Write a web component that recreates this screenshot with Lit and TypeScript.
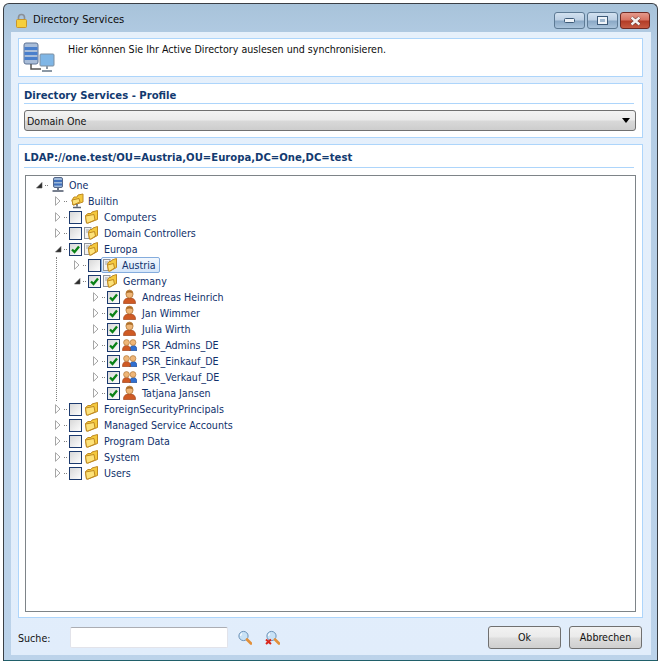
import { LitElement, html, css, svg } from "lit";
import { customElement } from "lit/decorators.js";

type Kind = "root" | "gpo" | "folder" | "ou" | "user" | "group";
interface Node { label: string; kind: Kind; check?: boolean; open?: boolean; selected?: boolean; guide?: boolean; children?: Node[]; }

const TREE: Node = {
  label: "One", kind: "root", open: true, children: [
    { label: "Builtin", kind: "gpo" },
    { label: "Computers", kind: "folder", check: false },
    { label: "Domain Controllers", kind: "ou", check: false },
    { label: "Europa", kind: "ou", check: true, open: true, guide: true, children: [
      { label: "Austria", kind: "ou", check: false, selected: true },
      { label: "Germany", kind: "ou", check: true, open: true, children: [
        { label: "Andreas Heinrich", kind: "user", check: true },
        { label: "Jan Wimmer", kind: "user", check: true },
        { label: "Julia Wirth", kind: "user", check: true },
        { label: "PSR_Admins_DE", kind: "group", check: true },
        { label: "PSR_Einkauf_DE", kind: "group", check: true },
        { label: "PSR_Verkauf_DE", kind: "group", check: true },
        { label: "Tatjana Jansen", kind: "user", check: true },
      ] },
    ] },
    { label: "ForeignSecurityPrincipals", kind: "folder", check: false },
    { label: "Managed Service Accounts", kind: "folder", check: false },
    { label: "Program Data", kind: "folder", check: false },
    { label: "System", kind: "folder", check: false },
    { label: "Users", kind: "folder", check: false },
  ],
};

const folderShape = svg`
  <path d="M1.5 6.5 L4 4.5 H7 L8 3 L13.5 1.5 V10.5 L4 14 H2.5 Z" fill="#f4c93e" stroke="#c08a22"/>
  <path d="M2.5 14 L1.5 7 L10 5.5 L11 11 L4 14 Z" fill="#fde27a" stroke="#c08a22"/>`;

function treeIcon(kind: Kind) {
  switch (kind) {
    case "root":
      return svg`<svg width="14" height="16" viewBox="0 0 14 16">
        <rect x="2.5" y="0.5" width="9" height="10" rx="1.5" fill="#9db8d8" stroke="#55678a"/>
        <rect x="3" y="3" width="8" height="2" fill="#3f6fbb"/><rect x="3" y="6.5" width="8" height="2" fill="#3f6fbb"/>
        <path d="M7 11V13M1.5 14H12.5" stroke="#4a5468" stroke-width="1.6"/></svg>`;
    case "gpo":
      return svg`<svg width="15" height="16" viewBox="0 0 15 16">
        <path d="M2 7 L4 4 H7 L8 2 L13 1 V9 L4 12 H3 Z" fill="#f4c93e" stroke="#c08a22"/>
        <path d="M3 12 L2 7 L9 5.5 L10 9 Z" fill="#fde27a" stroke="#c08a22"/>
        <path d="M7 11V13.5M3 14.5H11" stroke="#5a6270" stroke-width="1.5"/></svg>`;
    case "folder":
      return svg`<svg width="15" height="16" viewBox="0 0 15 16">${folderShape}</svg>`;
    case "ou":
      return svg`<svg width="15" height="16" viewBox="0 0 15 16">
        <rect x="0.5" y="2.5" width="6.5" height="11" fill="#f2f2f2" stroke="#8f949c"/>
        <path d="M2 5H5M2 7H5" stroke="#a0a6ac"/>
        <path d="M4.5 7 L6 4.5 H8 L9 3 L13.5 1.5 V10.5 L7 14 H5.5 Z" fill="#f4c93e" stroke="#c08a22"/>
        <path d="M5.5 14 L4.5 8 L10.5 6.5 L11.5 11 L7 14 Z" fill="#fde27a" stroke="#c08a22"/></svg>`;
    case "user":
      return svg`<svg width="15" height="16" viewBox="0 0 15 16">
        <path d="M1.5 14.5 C1.5 10.5 3.5 9 7.5 9 S13.5 10.5 13.5 14.5 Z" fill="#cf5a24" stroke="#a0441a" stroke-width=".7"/>
        <ellipse cx="7.5" cy="5" rx="3.6" ry="4" fill="#efb677" stroke="#b27a3c" stroke-width=".8"/>
        <path d="M4 4.5 C4.5 .5 10.5 .5 11 4.5 C9 3.2 6 3.2 4 4.5Z" fill="#a86a24"/></svg>`;
    case "group":
      return svg`<svg width="15" height="16" viewBox="0 0 15 16">
        <path d="M7.5 13.5 C7.5 10 9.5 8.5 11.5 8.5 S15 10 15 13.5 Z" fill="#2f6fd0" stroke="#1d4c98" stroke-width=".7"/>
        <circle cx="11" cy="5.5" r="2.9" fill="#efb677" stroke="#b27a3c" stroke-width=".7"/>
        <path d="M0.5 13.5 C0.5 10 2 8.5 4.5 8.5 S8.5 10 8.5 13.5 Z" fill="#cf5a24" stroke="#a0441a" stroke-width=".7"/>
        <circle cx="4.5" cy="5.5" r="2.9" fill="#efb677" stroke="#b27a3c" stroke-width=".7"/></svg>`;
  }
}

const lensIcon = svg`
  <circle cx="6.5" cy="6" r="4.6" fill="#c8e2f6" stroke="#6d93b8"/>
  <path d="M5 3.5 A3 3 0 0 0 3.6 6" stroke="#fff" fill="none" stroke-width="1.2"/>
  <path d="M10 9.5 L14 13.5" stroke="#e2903a" stroke-width="2.6" stroke-linecap="round"/>`;

@customElement("tree-node")
class TreeNode extends LitElement {
  static properties = { node: { attribute: false } };
  node!: Node;
  static styles = css`
    :host { display: block; }
    .row { display: flex; align-items: center; height: 16px; }
    .toggle { width: 8px; height: 16px; display: flex; align-items: center; margin-right: 2px; }
    .dots { width: 3px; height: 1px; margin-right: 2px; background: repeating-linear-gradient(90deg, #808080 0 1px, transparent 1px 2px); }
    .check { width: 13px; height: 13px; box-sizing: border-box; border: 1px solid #1c3a6e; margin-right: 2px; flex: none; display: flex;
      background: linear-gradient(135deg, #d8d8d8, #fdfdfd); }
    .check svg { display: block; }
    .icon { width: 15px; height: 16px; flex: none; margin-right: 4px; display: block; position: relative; z-index: 1; }
    .icon.root { width: 14px; margin-right: 3px; margin-left: 1px; }
    .icon.gpo { margin-right: 2px; margin-left: 1px; }
    .label { color: #10306b; white-space: nowrap; line-height: 15px; padding: 0 1px; }
    .label.sel { border: 1px solid #84acdd; border-radius: 2px; background: linear-gradient(#f3f8fe, #d3e5fa); padding: 0 3px 0 20px; margin-left: -21px; height: 16px; line-height: 14px; box-sizing: border-box; }
    .kids { margin-left: 19px; }
    .kids.guide { margin-left: 2px; border-left: 1px dotted #808080; padding-left: 16px; }
  `;
  render() {
    const n = this.node;
    return html`
      <div class="row">
        <span class="toggle">
          ${n.open
            ? html`<svg width="8" height="8" viewBox="0 0 8 8"><path d="M7 1.5V7H1.5Z" fill="#2b2b2b" stroke="#555" stroke-width=".6"/></svg>`
            : html`<svg width="8" height="10" viewBox="0 0 8 10"><path d="M1.5 .7V9.3L6 5Z" fill="#fff" stroke="#a6a6a6"/></svg>`}
        </span>
        <span class="dots"></span>
        ${n.check === undefined ? "" : html`<span class="check">${n.check
          ? html`<svg width="11" height="11" viewBox="0 0 11 11"><path d="M2 5.5 L4.5 8 L9 2.5" fill="none" stroke="#0a8216" stroke-width="2.3"/></svg>`
          : ""}</span>`}
        <span class="icon ${n.kind}">${treeIcon(n.kind)}</span>
        <span class="label ${n.selected ? "sel" : ""}">${n.label}</span>
      </div>
      ${n.children
        ? html`<div class="kids ${n.guide ? "guide" : ""}">${n.children.map((c) => html`<tree-node .node=${c}></tree-node>`)}</div>`
        : ""}
    `;
  }
}

@customElement("app-root")
export class AppRoot extends LitElement {
  static styles = css`
    :host { display: block; width: 661px; height: 664px; box-sizing: border-box; padding: 3px 3px 3px 3px; background: #fff;
      font: 10.6px "DejaVu Sans", Tahoma, sans-serif; font-stretch: condensed; color: #111; }
    .window { box-sizing: border-box; height: 658px; border: 1px solid #3a3f45; border-bottom-color: #20606a; border-radius: 6px 6px 0 0;
      background: linear-gradient(#a8c3da 0, #b3cce4 40px, #bcd3ea 100%); padding: 0 6px 5px 7px; display: flex; flex-direction: column; }
    .title { height: 28px; flex: none; display: flex; align-items: flex-start; }
    .lock { margin: 9px 5px 0 4px; display: block; }
    .title-text { font: 11.1px/14px "DejaVu Sans", sans-serif; font-stretch: condensed; color: #0c0c0c; flex: 1; margin-top: 9px; }
    .controls { display: flex; gap: 2px; margin-right: 1px; margin-top: 8px; }
    .ctl { width: 31px; height: 17px; box-sizing: border-box; border: 1px solid #5d7a94; border-radius: 3px;
      background: linear-gradient(#d2e1f0 0, #bdd0e4 45%, #8ba9c6 55%, #a9c3db 100%); display: flex; align-items: center; justify-content: center; }
    .ctl.close { width: 30px; border-color: #6e2a24; background: linear-gradient(#e59a8c 0, #d87463 45%, #b33d28 55%, #c65a42 100%); }
    .body { flex: 1; min-height: 0; background: linear-gradient(#e6f0fb, #e1edfb); padding: 6px 8px 0 7px; display: flex; flex-direction: column; gap: 6px; }
    .panel { background: #fff; border: 1px solid #add5fb; box-sizing: border-box; flex: none; }
    .intro { height: 39px; display: flex; padding: 3px 0 0 4px; }
    .intro .msg { margin-left: 13px; line-height: 14px; color: #0b0b0b; }
    .profile { height: 55px; padding: 5px 6px 0 5px; }
    .head { font-size: 11.2px; font-weight: bold; color: #123a70; line-height: 13px; padding-bottom: 3px; border-bottom: 1px solid #add5fb; margin-right: 2px; }
    .profile .head { padding-bottom: 1px; }
    .select { margin-top: 6px; height: 21px; box-sizing: border-box; border: 1px solid #707070; border-radius: 3px; width: 612px;
      background: linear-gradient(#f3f3f3 0, #ebebeb 45%, #d8d8d8 55%, #cdcdcd 100%); display: flex; align-items: center; justify-content: space-between; padding: 0 5px 0 2px; color: #111; }
    .arrow { width: 0; height: 0; border: 4px solid transparent; border-top: 5px solid #000; border-bottom: 0; }
    .main { flex: 1; min-height: 0; padding: 6px 6px 5px 5px; display: flex; flex-direction: column; }
    .tree { flex: 1; min-height: 0; margin: 7px 0 0 1px; border: 1px solid #7e8488; width: 611px; box-sizing: border-box; padding: 1px 0 0 9px; background: #fff; overflow: hidden; }
    .footer { height: 37px; flex: none; display: flex; align-items: center; margin-top: -6px; padding: 2px 1px 0 0; box-sizing: border-box; }
    .footer label { width: 52px; color: #111; }
    .input { width: 158px; height: 21px; box-sizing: border-box; background: #fff; border: 1px solid #e2e3ea; border-top-color: #abadb3; border-radius: 2px; }
    .search { display: flex; gap: 13px; margin-left: 9px; }
    .search svg { display: block; }
    .spacer { flex: 1; }
    .btn { width: 73px; height: 23px; box-sizing: border-box; border: 1px solid #707070; border-radius: 3px; text-align: center; line-height: 21px; color: #111;
      background: linear-gradient(#f2f2f2 0, #ebebeb 45%, #dcdcdc 55%, #cfcfcf 100%); }
    .btn + .btn { margin-left: 8px; }
  `;
  render() {
    return html`
      <div class="window">
        <div class="title">
          <svg class="lock" width="13" height="15" viewBox="0 0 13 15">
            <path d="M3.5 7V4.5a3 3 0 0 1 6 0V7" fill="none" stroke="#8a8f96" stroke-width="1.6"/>
            <rect x="1.5" y="6.5" width="10" height="8" rx="1" fill="#f6cf3c" stroke="#c9962a"/>
          </svg>
          <span class="title-text">Directory Services</span>
          <div class="controls">
            <div class="ctl"><svg width="11" height="5"><rect x=".5" y=".5" width="10" height="4" rx="1" fill="#eef3f8" stroke="#3d5a78"/></svg></div>
            <div class="ctl"><svg width="11" height="9"><rect x=".5" y=".5" width="10" height="8" fill="#eef3f8" stroke="#3d5a78"/><rect x="3" y="3" width="5" height="3" fill="#9fb8d0"/></svg></div>
            <div class="ctl close"><svg width="13" height="10" viewBox="0 0 13 10"><path d="M2.5 1.5 L10.5 8.5 M10.5 1.5 L2.5 8.5" stroke="#5e2a24" stroke-width="3.6"/><path d="M2.5 1.5 L10.5 8.5 M10.5 1.5 L2.5 8.5" stroke="#f6f2f0" stroke-width="2.4"/></svg></div>
          </div>
        </div>
        <div class="body">
          <div class="panel intro">
            <svg width="32" height="32" viewBox="0 0 32 32">
              <rect x="1" y="1" width="14" height="21" rx="2" fill="#a9bdd8" stroke="#5f7496"/>
              <rect x="1.5" y="5" width="13" height="3" fill="#4a7fcc"/><rect x="1.5" y="10" width="13" height="3" fill="#4a7fcc"/><rect x="1.5" y="15" width="13" height="3" fill="#4a7fcc"/>
              <path d="M8 22 V27 H18" stroke="#555" stroke-width="1.5" fill="none"/>
              <rect x="17" y="12" width="14" height="12" rx="1" fill="#7fb6e6" stroke="#7f8fa0"/>
              <path d="M24 24V27M19 29H29" stroke="#8c98a4" stroke-width="2"/>
            </svg>
            <div class="msg">Hier können Sie Ihr Active Directory auslesen und synchronisieren.</div>
          </div>
          <div class="panel profile">
            <div class="head">Directory Services - Profile</div>
            <div class="select"><span>Domain One</span><span class="arrow"></span></div>
          </div>
          <div class="panel main">
            <div class="head">LDAP://one.test/OU=Austria,OU=Europa,DC=One,DC=test</div>
            <div class="tree"><tree-node .node=${TREE}></tree-node></div>
          </div>
          <div class="footer">
            <label>Suche:</label>
            <div class="input"></div>
            <div class="search">
              <svg width="15" height="15" viewBox="0 0 15 15">${lensIcon}</svg>
              <svg width="15" height="15" viewBox="0 0 15 15">${lensIcon}<path d="M1 9.5 L6 14 M6 9.5 L1 14" stroke="#d8261c" stroke-width="2"/></svg>
            </div>
            <div class="spacer"></div>
            <div class="btn">Ok</div>
            <div class="btn">Abbrechen</div>
          </div>
        </div>
      </div>
    `;
  }
}
